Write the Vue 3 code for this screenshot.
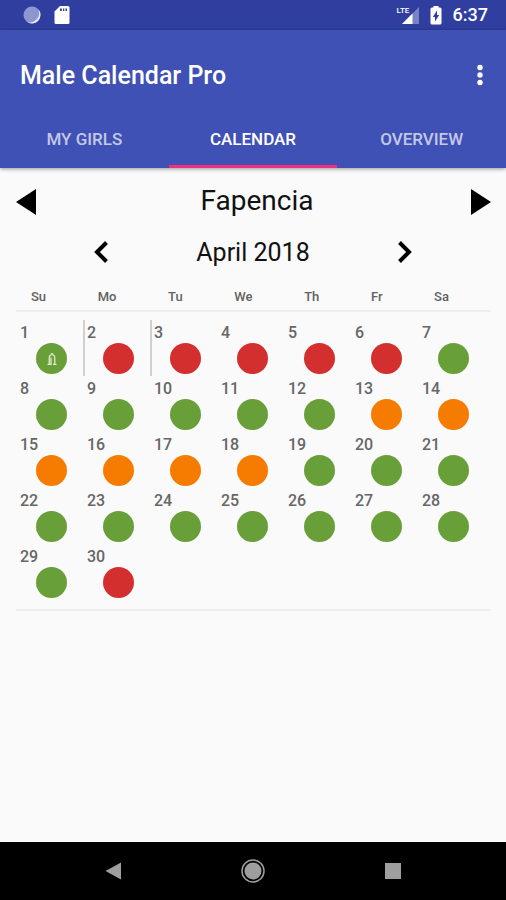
<template>
  <div class="screen">
    <div class="status-bar">
      <div class="status-group">
        <svg class="icon-18" viewBox="0 0 18 18">
          <circle cx="9" cy="9" r="8.500" fill="#8d97cf" />
          <path d="M15 3A8.500 8.500 0 0 1 3.500 15.500A9 9 0 0 0 15 3Z" fill="#e4e8f8" />
        </svg>
        <svg class="icon-sd" viewBox="0 0 16 20">
          <path d="M6 1h8q1.500 0 1.500 1.500v15q0 1.500-1.500 1.500H2q-1.500 0-1.500-1.500V6.500Z" fill="#fff" />
          <path d="M6 3.500h1.800v2.500H6zM9 3.500h1.300v2.500H9zM11.500 3.500h1.500v2.500h-1.500z" fill="#303f9f" />
        </svg>
      </div>
      <div class="status-group status-right">
        <div class="signal">
          <span class="lte">LTE</span>
          <svg class="icon-signal" viewBox="0 0 17 17">
            <path d="M17 0V17H0Z" fill="#7883c4" />
            <path d="M10.500 6.500V17H0Z" fill="#fff" />
          </svg>
        </div>
        <svg class="icon-battery" viewBox="0 0 12 20">
          <path d="M3.500 1h5v1.500H10q1.500 0 1.500 1.500v14q0 1.500-1.500 1.500H2Q.5 19.500.5 18V4Q.5 2.500 2 2.500h1.500Z" fill="#fff" />
          <path d="M7 5.500v4.500h2.200L5 16.500V12H2.800Z" fill="#303f9f" />
        </svg>
        <span class="time">6:37</span>
      </div>
    </div>

    <header class="app-header">
      <div class="toolbar">
        <h1>Male Calendar Pro</h1>
        <button type="button" class="btn-menu" aria-label="More options">
          <svg viewBox="0 0 8 22">
            <circle cx="4" cy="3.500" r="2.700" fill="#fff" />
            <circle cx="4" cy="11" r="2.700" fill="#fff" />
            <circle cx="4" cy="18.500" r="2.700" fill="#fff" />
          </svg>
        </button>
      </div>
      <nav class="tabs">
        <button
          v-for="tab in tabs"
          :key="tab"
          type="button"
          class="tab"
          :class="{ active: tab === activeTab }"
          @click="activeTab = tab"
        >
          {{ tab }}
        </button>
      </nav>
    </header>

    <main class="content">
      <div class="girl-row">
        <button type="button" class="btn-girl" aria-label="Previous girl">
          <svg viewBox="0 0 20 26"><path d="M20 0V26L0 13Z" /></svg>
        </button>
        <h2>Fapencia</h2>
        <button type="button" class="btn-girl" aria-label="Next girl">
          <svg viewBox="0 0 20 26"><path d="M0 0V26L20 13Z" /></svg>
        </button>
      </div>

      <div class="month-row">
        <button type="button" class="btn-month" aria-label="Previous month">
          <svg viewBox="0 0 14 22"><path d="M12.500 1.500L3 11L12.500 20.500" /></svg>
        </button>
        <h3>April 2018</h3>
        <button type="button" class="btn-month" aria-label="Next month">
          <svg viewBox="0 0 14 22"><path d="M1.500 1.500L11 11L1.500 20.500" /></svg>
        </button>
      </div>

      <table class="calendar">
        <thead>
          <tr>
            <th v-for="name in weekdays" :key="name">{{ name }}</th>
          </tr>
        </thead>
        <tbody>
          <tr v-for="(week, i) in weeks" :key="i">
            <td v-for="day in week" :key="day.number" :class="{ divided: day.divided }">
              <span class="day-number">{{ day.number }}</span>
              <span class="dot" :class="day.status">
                <svg v-if="day.protected" viewBox="0 0 12 14">
                  <path d="M3.200 12V5.500Q3.200 3.500 5 3Q5 1.500 6 1.500Q7 1.500 7 3Q8.800 3.500 8.800 5.500V12" />
                  <path d="M1.500 12.400H5V5.500M10.500 12.400H7" />
                </svg>
              </span>
            </td>
          </tr>
        </tbody>
      </table>
    </main>

    <footer class="nav-bar">
      <button type="button" aria-label="Back">
        <svg viewBox="0 0 24 24"><path d="M20 3.500V20.500L4.500 12Z" fill="#9e9e9e" /></svg>
      </button>
      <button type="button" aria-label="Home">
        <svg viewBox="0 0 24 24">
          <circle cx="12" cy="12" r="11" fill="none" stroke="#9e9e9e" stroke-width="1.500" />
          <circle cx="12" cy="12" r="8.500" fill="#9e9e9e" />
        </svg>
      </button>
      <button type="button" aria-label="Recent apps">
        <svg viewBox="0 0 24 24"><path d="M4 4H20V20H4Z" fill="#9e9e9e" /></svg>
      </button>
    </footer>
  </div>
</template>

<script setup>
import { ref } from 'vue';

const tabs = ['MY GIRLS', 'CALENDAR', 'OVERVIEW'];
const activeTab = ref('CALENDAR');

const weekdays = ['Su', 'Mo', 'Tu', 'We', 'Th', 'Fr', 'Sa'];

const getStatus = (number) => {
  if ((number >= 2 && number <= 6) || number === 30) return 'red';
  if (number >= 13 && number <= 18) return 'orange';
  return 'green';
};

const days = Array.from({ length: 30 }, (_, i) => ({
  number: i + 1,
  status: getStatus(i + 1),
  protected: i + 1 === 1,
  divided: i + 1 === 1 || i + 1 === 2,
}));

const weeks = [];
for (let i = 0; i < days.length; i += 7) {
  weeks.push(days.slice(i, i + 7));
}
</script>

<style>
body {
  background: #fafafa;
}
</style>

<style scoped>
.screen {
  display: flex;
  flex-direction: column;
  min-height: 100vh;
  background: #fafafa;
  color: #111;
  font-family: Roboto, "Liberation Sans", sans-serif;
}

button {
  display: flex;
  align-items: center;
  justify-content: center;
  padding: 0;
  border: none;
  background: none;
  font-family: inherit;
  cursor: pointer;
}

h1,
h2,
h3 {
  margin: 0;
}

svg {
  display: block;
}

.status-bar {
  display: flex;
  align-items: center;
  justify-content: space-between;
  height: 30px;
  padding: 0 18px 0 23px;
  background: #303f9f;
  color: white;
}

.status-group {
  display: flex;
  align-items: center;
  gap: 13px;
}

.status-right {
  gap: 11px;
}

.icon-18 {
  width: 18px;
  height: 18px;
}

.icon-sd {
  width: 16px;
  height: 20px;
}

.signal {
  display: flex;
  position: relative;
  padding-left: 5px;
}

.lte {
  position: absolute;
  left: 0;
  top: 0;
  font-size: 8px;
  line-height: 8px;
  font-weight: 500;
}

.icon-signal {
  width: 17px;
  height: 17px;
}

.icon-battery {
  width: 12px;
  height: 20px;
}

.time {
  font-size: 18px;
  line-height: 30px;
  font-weight: 500;
}

.app-header {
  background: #3f51b5;
  color: white;
  box-shadow: 0 1px 4px rgba(0, 0, 0, 0.4);
}

.toolbar {
  display: flex;
  align-items: center;
  justify-content: space-between;
  height: 90px;
  padding: 0 22px 0 20px;
}

.toolbar h1 {
  padding-top: 2px;
  font-size: 25px;
  line-height: 30px;
  font-weight: 500;
}

.btn-menu svg {
  width: 8px;
  height: 22px;
}

.tabs {
  display: grid;
  grid-template-columns: 1fr 1fr 1fr;
}

.tab {
  height: 48px;
  padding-bottom: 8px;
  border-bottom: 3px solid transparent;
  color: rgba(255, 255, 255, 0.7);
  font-size: 17px;
  font-weight: 500;
}

.tab.active {
  border-bottom-color: #f0307c;
  color: white;
}

.content {
  flex: 1;
  padding: 12px 15px 0 16px;
}

.girl-row {
  display: flex;
  align-items: center;
  justify-content: space-between;
  height: 44px;
}

.girl-row h2 {
  padding: 0 0 2px 7px;
  font-size: 28px;
  line-height: 40px;
  font-weight: 400;
}

.btn-girl svg {
  width: 20px;
  height: 26px;
}

.month-row {
  display: flex;
  align-items: center;
  justify-content: space-between;
  height: 56px;
  padding: 0 79px 0 78px;
}

.month-row h3 {
  padding-top: 2px;
  font-size: 25px;
  line-height: 32px;
  font-weight: 400;
}

.btn-month svg {
  width: 14px;
  height: 22px;
  fill: none;
  stroke: #000;
  stroke-width: 4;
}

.calendar,
.calendar thead,
.calendar tbody {
  display: block;
}

.calendar thead tr {
  display: flex;
  justify-content: space-between;
  height: 30px;
  padding: 0 42px 0 15px;
  border-bottom: 2px solid #eeeeee;
}

.calendar th {
  padding: 0;
  color: #616161;
  font-size: 13px;
  line-height: 34px;
  font-weight: 500;
}

.calendar tbody {
  padding: 8px 4px 9px 2px;
  border-bottom: 2px solid #eeeeee;
}

.calendar tbody tr {
  display: grid;
  grid-template-columns: repeat(7, 1fr);
}

.calendar td {
  display: flex;
  flex-direction: column;
  align-items: center;
  height: 56px;
  box-sizing: border-box;
  padding: 3px 0 0 2px;
  border-right: 2px solid transparent;
}

.calendar td.divided {
  border-right-color: #d0d0d0;
}

.day-number {
  align-self: flex-start;
  color: #666;
  font-size: 16px;
  line-height: 20px;
  font-weight: 500;
}

.dot {
  display: flex;
  align-items: center;
  justify-content: center;
  width: 31px;
  height: 31px;
  border-radius: 50%;
}

.dot svg {
  width: 12px;
  height: 14px;
  fill: none;
  stroke: #e6f2d8;
  stroke-width: 1.2;
}

.dot.green {
  background: #689f38;
}

.dot.red {
  background: #d32f2f;
}

.dot.orange {
  background: #f57c00;
}

.nav-bar {
  display: flex;
  align-items: center;
  justify-content: center;
  gap: 116px;
  height: 58px;
  background: #000;
}

.nav-bar svg {
  width: 24px;
  height: 24px;
}
</style>
